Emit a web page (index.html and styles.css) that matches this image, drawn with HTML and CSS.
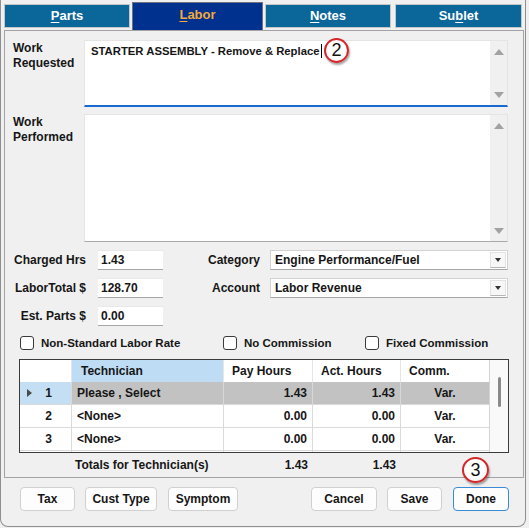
FILE: index.html
```html
<!DOCTYPE html>
<html lang="en">
<head>
  <meta charset="UTF-8">
  <title>Labor</title>
  <link rel="stylesheet" href="styles.css">
</head>
<body>

  <div class="window">
    <div class="tabs">
      <div class="tab tab-parts"><span><u>P</u>arts</span></div>
      <div class="tab tab-labor active"><span><u>L</u>abor</span></div>
      <div class="tab tab-notes"><span><u>N</u>otes</span></div>
      <div class="tab tab-sublet"><span>Su<u>b</u>let</span></div>
    </div>

    <div class="panel">
      <div class="memo-row">
        <div class="memo-label">Work<br>Requested</div>
        <div class="memo memo-req focused">
          <div class="memo-text">STARTER ASSEMBLY - Remove &amp; Replace<span class="caret"></span></div>
          <div class="memo-scroll"><span class="arr-up"></span><span class="arr-down"></span></div>
        </div>
      </div>

      <div class="memo-row row-gap">
        <div class="memo-label">Work<br>Performed</div>
        <div class="memo memo-perf">
          <div class="memo-text"></div>
          <div class="memo-scroll"><span class="arr-up"></span><span class="arr-down"></span></div>
        </div>
      </div>

      <div class="amounts">
        <label class="lbl">Charged Hrs</label>
        <div class="input">1.43</div>
        <label class="lbl lbl-2">Category</label>
        <div class="combo"><span class="combo-text">Engine Performance/Fuel</span><span class="combo-btn"><i></i></span></div>

        <label class="lbl">LaborTotal $</label>
        <div class="input">128.70</div>
        <label class="lbl lbl-2">Account</label>
        <div class="combo"><span class="combo-text">Labor Revenue</span><span class="combo-btn"><i></i></span></div>

        <label class="lbl">Est. Parts $</label>
        <div class="input">0.00</div>
      </div>

      <div class="checks">
        <div class="check check-1"><span class="box"></span>Non-Standard Labor Rate</div>
        <div class="check check-2"><span class="box"></span>No Commission</div>
        <div class="check"><span class="box"></span>Fixed Commission</div>
      </div>

      <div class="grid">
        <div class="grid-body">
          <div class="grid-row head">
            <div class="cell rowhead"></div>
            <div class="cell tech-head">Technician</div>
            <div class="cell">Pay Hours</div>
            <div class="cell">Act. Hours</div>
            <div class="cell">Comm.</div>
          </div>
          <div class="grid-row current">
            <div class="cell rowhead"><span class="pointer"></span>1</div>
            <div class="cell name">Please , Select</div>
            <div class="cell num">1.43</div>
            <div class="cell num">1.43</div>
            <div class="cell comm">Var.</div>
          </div>
          <div class="grid-row">
            <div class="cell rowhead">2</div>
            <div class="cell name">&lt;None&gt;</div>
            <div class="cell num">0.00</div>
            <div class="cell num">0.00</div>
            <div class="cell comm">Var.</div>
          </div>
          <div class="grid-row">
            <div class="cell rowhead">3</div>
            <div class="cell name">&lt;None&gt;</div>
            <div class="cell num">0.00</div>
            <div class="cell num">0.00</div>
            <div class="cell comm">Var.</div>
          </div>
          <div class="grid-row">
            <div class="cell rowhead"></div>
            <div class="cell name"></div>
            <div class="cell num"></div>
            <div class="cell num"></div>
            <div class="cell comm"></div>
          </div>
        </div>
        <div class="grid-scroll"><div class="thumb"></div></div>
      </div>

      <div class="totals">
        <span></span>
        <span class="totals-label">Totals for Technician(s)</span>
        <span class="num">1.43</span>
        <span class="num">1.43</span>
        <span></span>
      </div>
    </div>

    <div class="buttons">
      <div class="btn-group">
        <button class="btn w-tax">Tax</button>
        <button class="btn w-cust">Cust Type</button>
        <button class="btn w-symptom">Symptom</button>
      </div>
      <div class="btn-group">
        <button class="btn w-cancel">Cancel</button>
        <button class="btn w-save">Save</button>
        <button class="btn w-done default">Done</button>
      </div>
    </div>

    <span class="badge badge-2">2</span>
    <span class="badge badge-3">3</span>
  </div>

</body>
</html>
```

FILE: styles.css
```css
body {
  margin: 0;
  background: #f0f0f0;
  font: bold 12px "Liberation Sans", Arial, sans-serif;
  color: #161616;
}

.window {
  position: relative;
  box-sizing: border-box;
  width: 526px;
  height: 527px;
  background: #f0f0f0;
  border: 1px solid #8f8f8f;
  border-top: none;
  border-radius: 0 0 8px 8px;
}

/* tabs */
.tabs {
  display: flex;
  align-items: flex-start;
  height: 30px;
  padding-left: 3px;
}

.tab {
  box-sizing: border-box;
  height: 24px;
  margin-top: 4px;
  padding-bottom: 2px;
  background: #0b679a;
  color: #fff;
  font-size: 13px;
  border: 1px solid #c6c6c6;
  display: flex;
  align-items: center;
  justify-content: center;
}

.tab u { text-underline-offset: 2px; }

.tab-parts { width: 126px; margin-right: 2px; }
.tab-labor { width: 131px; margin-right: 2px; }
.tab-notes { width: 126px; margin-right: 4px; }
.tab-sublet { width: 127px; }

.tab.active {
  height: 28px;
  margin-top: 2px;
  background: #00318e;
  color: #f3a93a;
  border-color: #6d7480;
  border-bottom: none;
  padding-bottom: 4px;
}

/* main panel */
.panel {
  box-sizing: border-box;
  margin-left: 3px;
  width: 520px;
  height: 448px;
  border: 1px solid #a3a3a3;
  padding: 9px 15px 0 8px;
}

.memo-row {
  display: flex;
}

.row-gap { margin-top: 7px; }

.memo-label {
  width: 71px;
  padding-top: 1px;
  line-height: 15px;
}

.memo {
  box-sizing: border-box;
  width: 424px;
  display: flex;
  background: #fff;
  border: 1px solid #e4e4e4;
}

.memo-req {
  height: 67px;
  border-bottom: 2px solid #1769cf;
}

.memo-perf {
  height: 128px;
  border-bottom: 1px solid #a9a9a9;
}

.memo-text {
  flex: 1;
  padding: 3px 6px;
  font-size: 11.3px;
  line-height: 14px;
}

.caret {
  display: inline-block;
  width: 1px;
  height: 14px;
  margin-left: 1px;
  background: #000;
  vertical-align: -3px;
}

.memo-scroll {
  width: 17px;
  background: #f0f0f0;
  display: flex;
  flex-direction: column;
  justify-content: space-between;
  align-items: center;
  padding: 8px 0 7px;
}

.arr-up, .arr-down {
  width: 0;
  height: 0;
  border-left: 5px solid transparent;
  border-right: 5px solid transparent;
}
.arr-up { border-bottom: 6px solid #a2a2a2; }
.arr-down { border-top: 6px solid #a2a2a2; }

/* amounts and combos */
.amounts {
  display: grid;
  grid-template-columns: 85px 65px 107px 238px;
  grid-auto-rows: 20px;
  row-gap: 8px;
  margin-top: 8px;
}

.lbl {
  text-align: right;
  padding-right: 12px;
  line-height: 20px;
}

.lbl-2 { padding-right: 10px; }

.input {
  box-sizing: border-box;
  background: #fff;
  border-top: 1px solid #e8e8e8;
  border-bottom: 1px solid #a6a6a6;
  padding-left: 3px;
  line-height: 18px;
}

.combo {
  box-sizing: border-box;
  display: flex;
  background: #fff;
  border: 1px solid #d2d2d2;
  border-bottom-color: #a6a6a6;
}

.combo-text {
  flex: 1;
  padding-left: 4px;
  line-height: 18px;
}

.combo-btn {
  width: 14px;
  margin: 1px 1px 1px 0;
  background: #f7f7f7;
  border: 1px solid #e3e3e3;
  border-bottom-color: #b5b5b5;
  display: flex;
  align-items: center;
  justify-content: center;
}

.combo-btn i {
  width: 0;
  height: 0;
  border-left: 3.5px solid transparent;
  border-right: 3.5px solid transparent;
  border-top: 4px solid #333;
}

/* checkboxes */
.checks {
  display: flex;
  align-items: center;
  height: 14px;
  margin-top: 10px;
  padding-left: 7px;
  font-size: 11.5px;
}

.check {
  display: flex;
  align-items: center;
  gap: 7px;
}

.check-1 { width: 203px; }
.check-2 { width: 142px; }

.box {
  box-sizing: border-box;
  width: 14px;
  height: 14px;
  border: 1px solid #3a3a3a;
  border-radius: 3px;
  background: #fff;
}

/* technician grid */
.grid {
  display: flex;
  box-sizing: border-box;
  width: 490px;
  height: 94px;
  margin: 9px 0 0 6px;
  border: 1px solid #3b3b3b;
  background: #fff;
  overflow: hidden;
}

.grid-body {
  width: 470px;
  overflow: hidden;
}

.grid-row {
  display: grid;
  grid-template-columns: 52px 152px 89px 88px 89px;
  height: 23px;
}

.grid-row.head { height: 22px; }

.cell {
  box-sizing: border-box;
  display: flex;
  align-items: center;
  border-right: 1px solid #dadada;
  border-bottom: 1px solid #dadada;
  padding: 0 5px;
  white-space: nowrap;
}

.head .cell {
  padding-left: 8px;
  border-right-color: #e6e6e6;
  border-bottom: none;
}

.head .tech-head {
  background: #bedcf3;
  padding-left: 9px;
}

.rowhead {
  position: relative;
  justify-content: flex-end;
  padding-right: 19px;
}

.current .cell {
  background: #c2c2c2;
  border-right-color: #d8d8d8;
}

.current .rowhead { background: #c4dff4; }

.pointer {
  position: absolute;
  left: 7px;
  top: 7px;
  width: 0;
  height: 0;
  border-top: 4.5px solid transparent;
  border-bottom: 4.5px solid transparent;
  border-left: 5px solid #4a4a4a;
}

.num { justify-content: flex-end; }
.comm { justify-content: center; }

.grid-scroll {
  width: 18px;
  background: #f9f9f9;
  border-left: 1px solid #d4d4d4;
}

.thumb {
  width: 3px;
  height: 30px;
  margin: 17px 0 0 8px;
  border-radius: 2px;
  background: #8a8a8a;
}

.totals {
  display: grid;
  grid-template-columns: 55px 149px 89px 88px 89px;
  height: 24px;
  align-items: center;
  padding-left: 7px;
}

.totals .num {
  text-align: right;
  padding-right: 5px;
}

/* bottom buttons */
.buttons {
  display: flex;
  justify-content: space-between;
  width: 489px;
  margin-top: 9px;
  padding-left: 19px;
}

.btn-group {
  display: flex;
  gap: 10px;
}

.btn {
  height: 24px;
  padding: 0;
  background: #fdfdfd;
  border: 1px solid #d0d0d0;
  border-radius: 4px;
  font: bold 12px "Liberation Sans", Arial, sans-serif;
  color: #161616;
}

.btn.default { border-color: #3b8ad6; }

.w-tax { width: 55px; }
.w-cust { width: 72px; }
.w-symptom { width: 70px; margin-left: 1px; }
.w-cancel { width: 66px; }
.w-save { width: 55px; }
.w-done { width: 56px; margin-left: 1px; }

/* callout markers */
.badge {
  position: absolute;
  box-sizing: border-box;
  border-radius: 50%;
  border: 2px solid #d3272b;
  background: radial-gradient(circle at 40% 35%, #fff 55%, #e9e9e9);
  box-shadow: 1px 2px 2px rgba(0, 0, 0, 0.35);
  color: #111;
  font: 18px "Liberation Sans", Arial, sans-serif;
  display: flex;
  align-items: center;
  justify-content: center;
}

.badge-2 {
  left: 323px;
  top: 38px;
  width: 25px;
  height: 25px;
}

.badge-3 {
  left: 461px;
  top: 457px;
  width: 27px;
  height: 26px;
}
```
